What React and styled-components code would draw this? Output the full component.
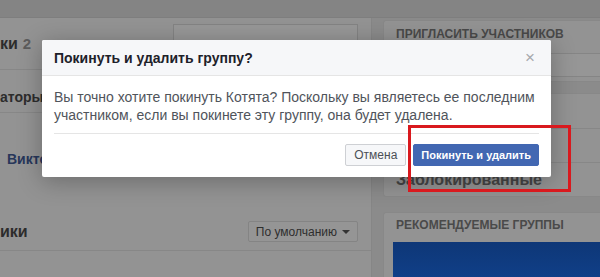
import React from "react";
import styled, { createGlobalStyle } from "styled-components";

const GlobalStyle = createGlobalStyle`
  html, body {
    margin: 0;
    padding: 0;
    width: 600px;
    height: 277px;
    overflow: hidden;
    background: #8b8b8b;
    font-family: "Liberation Sans", Arial, sans-serif;
  }
`;

const Page = styled.div`
  position: relative;
  width: 600px;
  height: 277px;
  overflow: hidden;
  background: #8b8b8b;
`;

const TopStrip = styled.div`
  height: 17px;
  background: #848484;
  border-bottom: 1px solid #7e7e7e;
`;

const Columns = styled.div`
  display: flex;
  gap: 11px;
  align-items: flex-start;
`;

const LeftColumn = styled.div`
  width: 371px;
  height: 260px;
  background: #939393;
  border-right: 1px solid #868686;
  display: flex;
  flex-direction: column;
`;

const Row = styled.div`
  display: flex;
  align-items: ${(p) => p.$align || "center"};
  justify-content: space-between;
  height: ${(p) => p.$h}px;
  padding-top: ${(p) => p.$pt || 0}px;
  padding-right: 13px;
  box-sizing: border-box;
  border-bottom: ${(p) => (p.$line ? "1px solid #878787" : "none")};
`;

const Heading = styled.div`
  font-size: ${(p) => p.$size || 16}px;
  font-weight: bold;
  color: #2c2c2c;
  line-height: 18px;
  white-space: nowrap;
`;

const Count = styled.span`
  margin-left: 5px;
  color: #5c5c5c;
  font-size: 15px;
`;

const NameLink = styled.div`
  margin-left: 7px;
  white-space: nowrap;
  font-size: 14px;
  font-weight: bold;
  color: #27365a;
  line-height: 18px;
`;

const SearchBox = styled.div`
  width: 183px;
  height: 30px;
  margin-top: -8px;
  border: 1px solid #838383;
  background: #979797;
`;

const Dropdown = styled.div`
  display: flex;
  align-items: center;
  gap: 5px;
  height: 21px;
  padding: 0 7px;
  box-sizing: border-box;
  background: #959595;
  border: 1px solid #848484;
  border-radius: 2px;
  font-size: 12px;
  color: #2e2e2e;
`;

const Caret = styled.span`
  width: 0;
  height: 0;
  border-left: 4px solid transparent;
  border-right: 4px solid transparent;
  border-top: 4px solid #333;
`;

const RightColumn = styled.div`
  flex: 1;
  margin-top: 2px;
  display: flex;
  flex-direction: column;
`;

const Panel = styled.div`
  background: #939393;
  border: 1px solid #888;
  border-right: none;
  border-radius: 3px 0 0 3px;
  margin-top: ${(p) => p.$mt || 0}px;
  height: ${(p) => (p.$h ? `${p.$h}px` : "auto")};
  box-sizing: border-box;
  overflow: hidden;
`;

const PanelTitle = styled.div`
  padding: ${(p) => p.$pad || "6px 12px 0"};
  font-size: 12px;
  font-weight: bold;
  color: #4a4a4a;
  line-height: 14px;
`;

const InviteInput = styled.div`
  margin-top: 12px;
  height: 22px;
  border-top: 1px solid #858585;
  border-bottom: 1px solid #858585;
  background: #969696;
`;

const ListRow = styled.div`
  height: ${(p) => p.$h}px;
  display: flex;
  align-items: center;
  padding-left: 12px;
  box-sizing: border-box;
  border-bottom: ${(p) => (p.$line ? "1px solid #878787" : "none")};
  font-size: 16px;
  font-weight: bold;
  color: #454545;
`;

const GroupImage = styled.div`
  margin: 10px 0 0 9px;
  height: 40px;
  background: linear-gradient(180deg, #0e3777 0%, #10408a 100%);
`;

const Dialog = styled.div`
  position: absolute;
  left: 42px;
  top: 40px;
  width: 509px;
  background: #fff;
  border-radius: 2px;
  box-shadow: 0 4px 24px rgba(0, 0, 0, 0.28);
  overflow: hidden;
`;

const DialogHeader = styled.div`
  height: 36px;
  display: flex;
  align-items: center;
  justify-content: space-between;
  padding: 0 12px;
  background: #f6f7f9;
  border-bottom: 1px solid #e5e5e5;
  box-sizing: border-box;
`;

const DialogTitle = styled.div`
  font-size: 14px;
  font-weight: bold;
  color: #1d2129;
`;

const Close = styled.span`
  font-size: 17px;
  color: #a7a9ad;
  line-height: 1;
  margin-right: 4px;
`;

const DialogBody = styled.div`
  padding: 12px 12px 9px;
  font-size: 14px;
  line-height: 18px;
  color: #50545b;
`;

const DialogFooter = styled.div`
  margin: 0 12px;
  padding: 10px 0 11px;
  border-top: 1px solid #e5e5e5;
  display: flex;
  justify-content: flex-end;
  gap: 7px;
`;

const Button = styled.button`
  height: 22px;
  padding: 0 ${(p) => (p.$primary ? 7 : 8)}px;
  border-radius: 2px;
  font-family: "Liberation Sans", Arial, sans-serif;
  font-size: ${(p) => (p.$primary ? 11 : 12)}px;
  font-weight: ${(p) => (p.$primary ? "bold" : "normal")};
  line-height: 20px;
  cursor: pointer;
  border: 1px solid ${(p) => (p.$primary ? "#4267b2" : "#ced0d4")};
  background: ${(p) => (p.$primary ? "#4267b2" : "#f6f7f9")};
  color: ${(p) => (p.$primary ? "#fff" : "#4b4f56")};
`;

const Highlight = styled.div`
  position: absolute;
  left: 408px;
  top: 125px;
  width: 163px;
  height: 67px;
  border: 3px solid #d9191e;
  box-sizing: border-box;
`;

const App = () => {
  return (
    <Page>
      <GlobalStyle />
      <TopStrip />
      <Columns>
        <LeftColumn>
          <Row $h={52} $line>
            <Heading>
              ки<Count>2</Count>
            </Heading>
            <SearchBox />
          </Row>
          <Row $h={43} $align="flex-start" $pt={18} $line>
            <Heading $size={14}>аторы</Heading>
          </Row>
          <Row $h={100} $align="flex-start" $pt={37}>
            <NameLink>Виктория</NameLink>
          </Row>
          <Row $h={38} $line>
            <Heading>ики</Heading>
            <Dropdown>
              По умолчанию <Caret />
            </Dropdown>
          </Row>
        </LeftColumn>
        <RightColumn>
          <Panel $h={62}>
            <PanelTitle>ПРИГЛАСИТЬ УЧАСТНИКОВ</PanelTitle>
            <InviteInput />
          </Panel>
          <Panel $mt={11} $h={104}>
            <ListRow $h={35} $line />
            <ListRow $h={34} $line />
            <ListRow $h={33}>Заблокированные</ListRow>
          </Panel>
          <Panel $mt={15} $h={80}>
            <PanelTitle $pad="5px 12px 0">РЕКОМЕНДУЕМЫЕ ГРУППЫ</PanelTitle>
            <GroupImage />
          </Panel>
        </RightColumn>
      </Columns>

      <Dialog>
        <DialogHeader>
          <DialogTitle>Покинуть и удалить группу?</DialogTitle>
          <Close>×</Close>
        </DialogHeader>
        <DialogBody>
          Вы точно хотите покинуть Котята? Поскольку вы являетесь ее последним
          <br />
          участником, если вы покинете эту группу, она будет удалена.
        </DialogBody>
        <DialogFooter>
          <Button>Отмена</Button>
          <Button $primary>Покинуть и удалить</Button>
        </DialogFooter>
      </Dialog>
      <Highlight />
    </Page>
  );
};

export default App;
